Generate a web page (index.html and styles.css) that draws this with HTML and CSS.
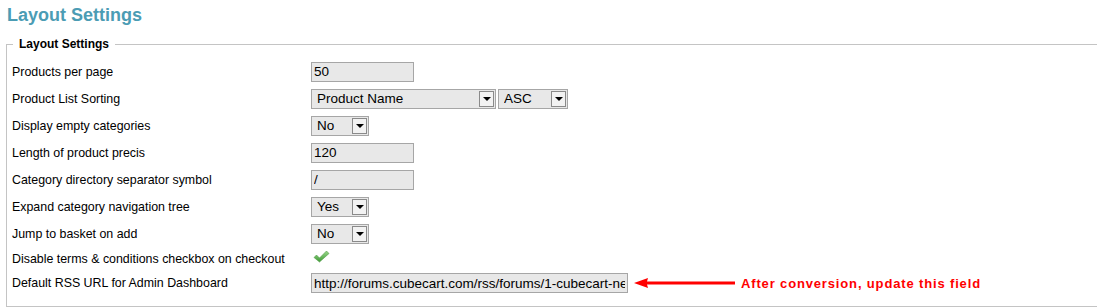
FILE: index.html
```html
<!DOCTYPE html>
<html lang="en">
<head>
    <meta charset="UTF-8">
    <title>Layout Settings</title>
    <link rel="stylesheet" href="styles.css">
</head>
<body>
    <h1 class="page-title">Layout Settings</h1>
    <fieldset class="settings">
        <legend>Layout Settings</legend>
        <div class="row">
            <label for="ppp">Products per page</label>
            <input type="text" id="ppp" class="text" value="50">
        </div>
        <div class="row">
            <label for="sort">Product List Sorting</label>
            <div class="controls">
                <span class="select wide"><select id="sort"><option>Product Name</option></select><span class="caret"></span></span>
                <span class="select dir"><select><option>ASC</option></select><span class="caret"></span></span>
            </div>
        </div>
        <div class="row">
            <label for="empty">Display empty categories</label>
            <span class="select small"><select id="empty"><option>No</option></select><span class="caret"></span></span>
        </div>
        <div class="row">
            <label for="precis">Length of product precis</label>
            <input type="text" id="precis" class="text" value="120">
        </div>
        <div class="row">
            <label for="sep">Category directory separator symbol</label>
            <input type="text" id="sep" class="text" value="/">
        </div>
        <div class="row">
            <label for="tree">Expand category navigation tree</label>
            <span class="select small"><select id="tree"><option>Yes</option></select><span class="caret"></span></span>
        </div>
        <div class="row">
            <label for="basket">Jump to basket on add</label>
            <span class="select small"><select id="basket"><option>No</option></select><span class="caret"></span></span>
        </div>
        <div class="row short">
            <label>Disable terms &amp; conditions checkbox on checkout</label>
            <svg class="check" width="17" height="13" viewBox="0 0 17 13">
                <defs>
                    <linearGradient id="g" x1="0" y1="0" x2="0" y2="1">
                        <stop offset="0" stop-color="#9ad88a"/>
                        <stop offset="1" stop-color="#3e9a36"/>
                    </linearGradient>
                </defs>
                <path d="M1 7.5 L3.5 5 L6.5 8 L13.5 1 L16 3.5 L6.5 12 Z" fill="url(#g)" stroke="#4f9a45" stroke-width="0.6"/>
            </svg>
        </div>
        <div class="row short">
            <label for="rss">Default RSS URL for Admin Dashboard</label>
            <div class="controls">
                <input type="text" id="rss" class="text rss" value="http://forums.cubecart.com/rss/forums/1-cubecart-news/">
                <svg class="pointer" width="104" height="12" viewBox="0 0 104 12">
                    <path d="M2 6 L16 1 L15 4.5 L103 4.5 L103 7.5 L15 7.5 L16 11 Z" fill="#ff0000"/>
                </svg>
                <span class="note">After conversion, update this field</span>
            </div>
        </div>
    </fieldset>
</body>
</html>
```

FILE: styles.css
```css
* {
    margin: 0;
    padding: 0;
    box-sizing: border-box;
}
html, body {
    overflow: hidden;
}
body {
    font-family: "Liberation Sans", Arial, sans-serif;
    font-size: 12.4px;
    color: #000;
    background: #fff;
    padding: 5px 0 0 6px;
}
.page-title {
    font-size: 18px;
    line-height: 21px;
    font-weight: bold;
    color: #4b9cb4;
    margin: 0 0 11px 1px;
}
.settings {
    width: 1120px;
    border: 1px solid #c4c4c4;
    padding: 7px 0 11px 5px;
}
.settings legend {
    font-weight: bold;
    font-size: 12px;
    line-height: 14px;
    padding: 0 6px;
    margin-left: 1px;
}
.row {
    display: flex;
    align-items: center;
    height: 27px;
}
.row.short {
    height: 24px;
}
.row label {
    width: 299px;
    flex-shrink: 0;
}
.controls {
    display: flex;
    align-items: center;
}
.text {
    width: 103px;
    height: 20px;
    background: #e8e8e8;
    border: 1px solid #a6a6a6;
    font-family: "Liberation Sans", Arial, sans-serif;
    font-size: 13.5px;
    color: #000;
    padding: 0 2px;
}
.text.rss {
    width: 317px;
}
.select {
    position: relative;
    display: inline-block;
    height: 20px;
}
.select select {
    appearance: none;
    -webkit-appearance: none;
    width: 100%;
    height: 20px;
    background: #e8e8e8;
    border: 1px solid #a6a6a6;
    font-family: "Liberation Sans", Arial, sans-serif;
    font-size: 13.5px;
    color: #000;
    padding: 0 0 0 5px;
}
.select.wide {
    width: 185px;
}
.select.dir {
    width: 70px;
    margin-left: 2px;
}
.select.small {
    width: 58px;
}
.caret {
    position: absolute;
    top: 2px;
    right: 2px;
    width: 15px;
    height: 16px;
    background: #f2f2f2;
    border: 1px solid #8a8a8a;
}
.caret::after {
    content: "";
    position: absolute;
    left: 3px;
    top: 5px;
    border-left: 4px solid transparent;
    border-right: 4px solid transparent;
    border-top: 4px solid #000;
}
.check {
    margin: -6px 0 0 2px;
}
.pointer {
    margin-left: 4px;
}
.note {
    margin-left: 5px;
    font-family: "Liberation Sans", Arial, sans-serif;
    font-weight: bold;
    font-size: 13px;
    letter-spacing: 0.85px;
    color: #ff0000;
}
```
